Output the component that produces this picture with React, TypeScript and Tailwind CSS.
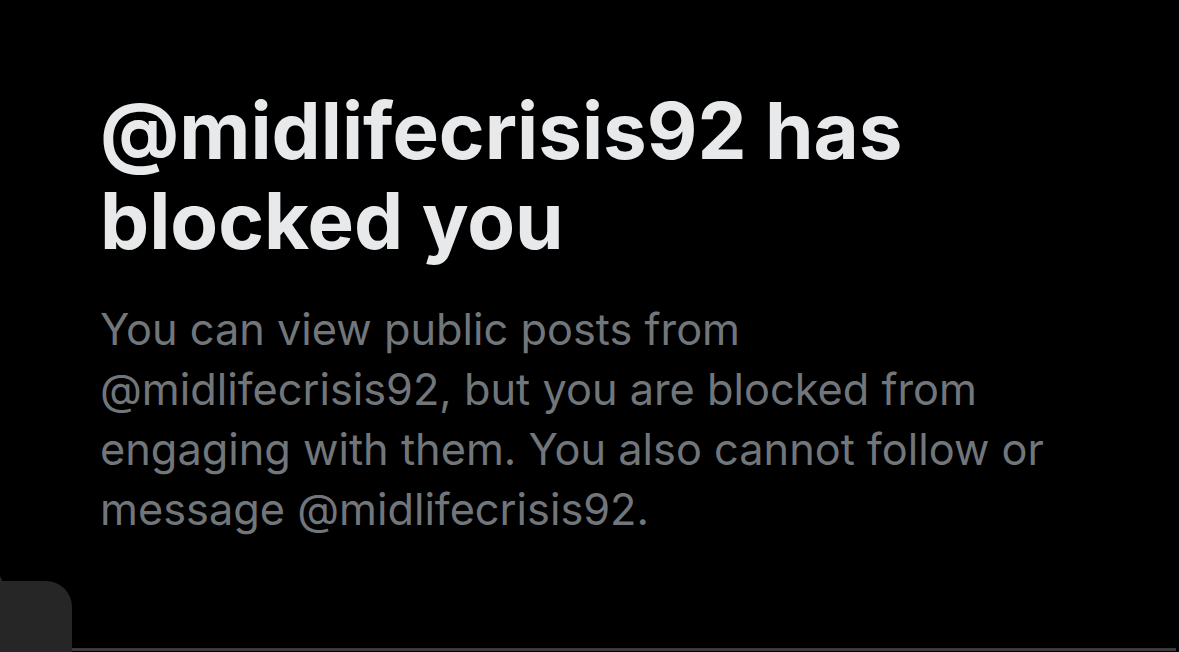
export default function App() {
  return (
    <div className="relative flex h-[652px] w-full flex-col overflow-hidden bg-black" style={{ fontFamily: "Inter, 'Noto Sans', sans-serif" }}>
      <div className="pl-[100px] pt-[86px]">
        {/* Heading */}
        <h1 className="whitespace-nowrap text-[78px] font-bold leading-[90px] text-[#e7e9ea]">
          @midlifecrisis92 has
          <br />
          blocked you
        </h1>

        {/* Description */}
        <p className="mt-[33px] whitespace-nowrap text-[43.3px] leading-[60px] text-[#71767b]">
          You can view public posts from
          <br />
          @midlifecrisis92, but you are blocked from
          <br />
          engaging with them. You also cannot follow or
          <br />
          message @midlifecrisis92.
        </p>
      </div>

      <div className="flex-1" />

      {/* Bottom bar */}
      <div className="relative flex h-[71px] items-end">
        <div className="absolute -top-[10px] left-0 h-[10px] w-[6px] overflow-hidden">
          <div className="h-full w-full rounded-bl-[6px] shadow-[-4px_4px_0_0_#262626]" />
        </div>
        <div className="h-full w-[72px] rounded-tr-[26px] bg-[#262626]" />
        <div className="mb-[1px] mr-[3px] h-[3px] flex-1 bg-[#3a3b3f]" />
      </div>
    </div>
  );
}
